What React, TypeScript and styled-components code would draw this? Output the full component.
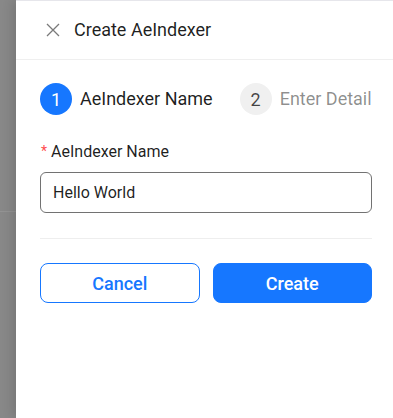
import React from "react";
import styled, { createGlobalStyle } from "styled-components";

const Global = createGlobalStyle`
  html, body { margin: 0; padding: 0; background: #fff; }
  body { font-family: Roboto, "Noto Sans", Arial, sans-serif; -webkit-font-smoothing: antialiased; }
  * { box-sizing: border-box; }
`;

const Page = styled.div`
  display: flex;
  width: 393px;
  height: 418px;
  overflow: hidden;
`;

const Backdrop = styled.div`
  width: 16px;
  flex: none;
  background: #888888;
  padding-top: 211px;
`;

const BackdropLine = styled.div`
  height: 1px;
  background: #939393;
`;

const Panel = styled.div`
  flex: 1;
  display: flex;
  flex-direction: column;
  background: #fff;
  border-top: 1px solid #e6e6eb;
  box-shadow: -4px 0 10px rgba(0, 0, 0, 0.12);
  position: relative;
`;

const Header = styled.div`
  height: 59px;
  display: flex;
  align-items: center;
  gap: 14px;
  padding-left: 30px;
  border-bottom: 1px solid #efefef;
`;

const Close = styled.button`
  width: 14px;
  height: 14px;
  padding: 0;
  border: none;
  background: none;
  display: flex;
  align-items: center;
  justify-content: center;
  color: #7a7a7a;
`;

const Title = styled.div`
  font-size: 18px;
  color: rgba(0, 0, 0, 0.88);
  line-height: 24px;
`;

const Body = styled.div`
  padding: 23px 21px 0 24px;
  display: flex;
  flex-direction: column;
`;

const Steps = styled.div`
  display: flex;
  align-items: center;
  gap: 27px;
`;

const Step = styled.div`
  display: flex;
  align-items: center;
  gap: 8px;
`;

const StepIcon = styled.div<{ $active?: boolean }>`
  width: 32px;
  height: 32px;
  border-radius: 50%;
  display: flex;
  align-items: center;
  justify-content: center;
  font-size: 18px;
  background: ${(p) => (p.$active ? "#1677ff" : "#f0f0f0")};
  color: ${(p) => (p.$active ? "#fff" : "rgba(0,0,0,0.72)")};
`;

const StepTitle = styled.div<{ $active?: boolean }>`
  font-size: 18px;
  line-height: 24px;
  white-space: nowrap;
  color: ${(p) => (p.$active ? "rgba(0,0,0,0.88)" : "rgba(0,0,0,0.45)")};
`;

const Label = styled.label`
  margin-top: 26px;
  display: flex;
  align-items: center;
  font-size: 16px;
  line-height: 22px;
  color: rgba(0, 0, 0, 0.88);
`;

const Required = styled.span`
  color: #ff4d4f;
  margin-left: 1px;
  margin-right: 4px;
  font-size: 14px;
  line-height: 14px;
  align-self: flex-start;
  margin-top: 3px;
`;

const Input = styled.input`
  margin-top: 9px;
  height: 41px;
  width: 100%;
  border: 1px solid #727272;
  border-radius: 6px;
  padding: 0 12px;
  font-family: inherit;
  font-size: 16px;
  color: rgba(0, 0, 0, 0.88);
  outline: none;
  background: #fff;
`;

const Divider = styled.div`
  margin-top: 25px;
  height: 1px;
  background: #eeeeee;
`;

const Actions = styled.div`
  margin-top: 24px;
  display: grid;
  grid-template-columns: 1fr 1fr;
  gap: 13px;
`;

const Button = styled.button<{ $primary?: boolean }>`
  height: 40px;
  border-radius: 8px;
  font-family: inherit;
  font-size: 18px;
  font-weight: 500;
  border: 1px solid #1677ff;
  background: ${(p) => (p.$primary ? "#1677ff" : "#fff")};
  color: ${(p) => (p.$primary ? "#fff" : "#1677ff")};
`;

export default function App() {
  return (
    <>
      <Global />
      <Page>
        <Backdrop>
          <BackdropLine />
        </Backdrop>
        <Panel>
          <Header>
            <Close aria-label="close">
              <svg width="14" height="14" viewBox="0 0 14 14">
                <path d="M1 1 L13 13 M13 1 L1 13" stroke="currentColor" strokeWidth="1.3" fill="none" />
              </svg>
            </Close>
            <Title>Create AeIndexer</Title>
          </Header>
          <Body>
            <Steps>
              <Step>
                <StepIcon $active>1</StepIcon>
                <StepTitle $active>AeIndexer Name</StepTitle>
              </Step>
              <Step>
                <StepIcon>2</StepIcon>
                <StepTitle>Enter Detail</StepTitle>
              </Step>
            </Steps>
            <Label>
              <Required>*</Required>AeIndexer Name
            </Label>
            <Input defaultValue="Hello World" />
            <Divider />
            <Actions>
              <Button>Cancel</Button>
              <Button $primary>Create</Button>
            </Actions>
          </Body>
        </Panel>
      </Page>
    </>
  );
}
